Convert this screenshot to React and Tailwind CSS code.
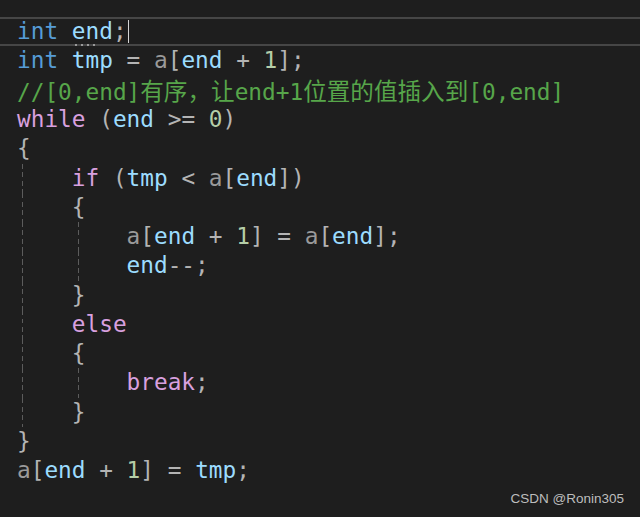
import React from "react";

const C = {
  kw: "text-[#569cd6]",
  ctl: "text-[#d8a0df]",
  v: "text-[#9cdcfe]",
  p: "text-[#9a9a9a]",
  op: "text-[#b4b4b4]",
  num: "text-[#b5cea8]",
  cm: "text-[#57a64a]",
};

const S = ({ c, children }) => <span className={C[c]}>{children}</span>;
const Cjk = ({ children }) => (
  <span className="text-[23.6px] [font-family:'Noto_Sans_CJK_SC','DejaVu_Sans_Mono',monospace]">
    {children}
  </span>
);

function Guide({ x }) {
  return (
    <span
      className="absolute top-0 bottom-0 w-px bg-[repeating-linear-gradient(to_bottom,#5c5c5c_0px,#5c5c5c_5px,transparent_5px,transparent_8.5px)]"
      style={{ left: x }}
    />
  );
}

function Line({ children, guides = [], current = false }) {
  return (
    <div
      className={
        "relative h-[29.27px] whitespace-pre pl-[17px] box-border " +
        (current
          ? "border-y-2 border-[#464646] leading-[25.27px]"
          : "leading-[29.27px]")
      }
    >
      {guides.map((g) => (
        <Guide key={g} x={g} />
      ))}
      {children}
    </div>
  );
}

export default function App() {
  return (
    <div className="relative w-[640px] h-[517px] overflow-hidden bg-[#1e1e1e] [font-family:'DejaVu_Sans_Mono',monospace] text-[22.76px] text-[#d4d4d4]">
      <div className="pt-[17.2px]">
        <Line current>
          <S c="kw">int</S> <S c="v">end</S>
          <S c="op">;</S>
          <span className="inline-block w-px h-[23px] bg-[#d4d4d4] align-[-4px] ml-px" />
          <span className="absolute left-[75px] bottom-[-2px] flex gap-[4px]">
            <span className="w-[2px] h-[2px] bg-[#9a9a9a]" />
            <span className="w-[2px] h-[2px] bg-[#9a9a9a]" />
            <span className="w-[2px] h-[2px] bg-[#9a9a9a]" />
            <span className="w-[2px] h-[2px] bg-[#9a9a9a]" />
          </span>
        </Line>
        <Line>
          <S c="kw">int</S> <S c="v">tmp</S> <S c="op">=</S> <S c="p">a</S>
          <S c="op">[</S>
          <S c="v">end</S> <S c="op">+</S> <S c="num">1</S>
          <S c="op">];</S>
        </Line>
        <Line>
          <span className={C.cm}>
            //[0,end]<Cjk>有序，让</Cjk>end+1<Cjk>位置的值插入到</Cjk>[0,end]
          </span>
        </Line>
        <Line>
          <S c="ctl">while</S> <S c="op">(</S>
          <S c="v">end</S> <S c="op">&gt;=</S> <S c="num">0</S>
          <S c="op">)</S>
        </Line>
        <Line>
          <S c="op">{"{"}</S>
        </Line>
        <Line guides={[22]}>
          {"    "}
          <S c="ctl">if</S> <S c="op">(</S>
          <S c="v">tmp</S> <S c="op">&lt;</S> <S c="p">a</S>
          <S c="op">[</S>
          <S c="v">end</S>
          <S c="op">])</S>
        </Line>
        <Line guides={[22]}>
          {"    "}
          <S c="op">{"{"}</S>
        </Line>
        <Line guides={[22, 78]}>
          {"        "}
          <S c="p">a</S>
          <S c="op">[</S>
          <S c="v">end</S> <S c="op">+</S> <S c="num">1</S>
          <S c="op">]</S> <S c="op">=</S> <S c="p">a</S>
          <S c="op">[</S>
          <S c="v">end</S>
          <S c="op">];</S>
        </Line>
        <Line guides={[22, 78]}>
          {"        "}
          <S c="v">end</S>
          <S c="op">--;</S>
        </Line>
        <Line guides={[22]}>
          {"    "}
          <S c="op">{"}"}</S>
        </Line>
        <Line guides={[22]}>
          {"    "}
          <S c="ctl">else</S>
        </Line>
        <Line guides={[22]}>
          {"    "}
          <S c="op">{"{"}</S>
        </Line>
        <Line guides={[22, 78]}>
          {"        "}
          <S c="ctl">break</S>
          <S c="op">;</S>
        </Line>
        <Line guides={[22]}>
          {"    "}
          <S c="op">{"}"}</S>
        </Line>
        <Line>
          <S c="op">{"}"}</S>
        </Line>
        <Line>
          <S c="p">a</S>
          <S c="op">[</S>
          <S c="v">end</S> <S c="op">+</S> <S c="num">1</S>
          <S c="op">]</S> <S c="op">=</S> <S c="v">tmp</S>
          <S c="op">;</S>
        </Line>
      </div>
      <div className="absolute right-[16px] bottom-[8px] text-[13.5px] text-[#bdbdbd] [font-family:'Liberation_Sans',Arial,sans-serif]">
        CSDN @Ronin305
      </div>
    </div>
  );
}
